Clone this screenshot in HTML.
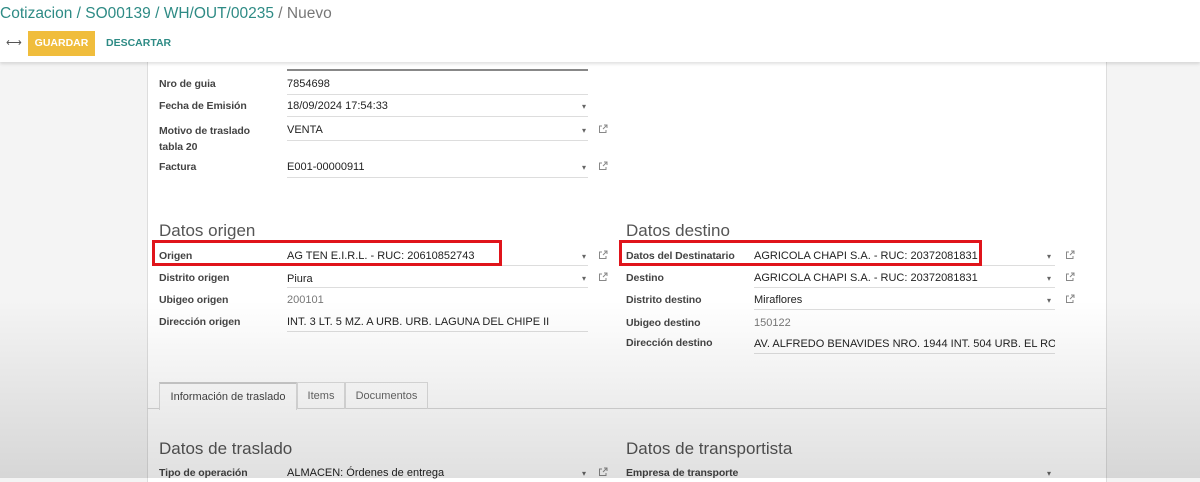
<!DOCTYPE html>
<html><head><meta charset="utf-8"><style>
*{margin:0;padding:0;box-sizing:border-box}
body{width:1200px;height:478px;overflow:hidden;background:#f4f4f4;font-family:"Liberation Sans",Arial,sans-serif;position:relative;color:#333}
.a{position:absolute;white-space:nowrap}
.top{position:absolute;left:0;top:0;width:1200px;height:62px;background:#fff;box-shadow:0 2px 3px rgba(0,0,0,.12);z-index:5}
.bc{left:0;top:5px;font-size:15.5px;color:#2e8b85}
.bc span{color:#777}
.btn{left:28px;top:31px;width:67px;height:25px;background:#f0bd3c;color:#fff;font-size:10.5px;font-weight:bold;text-align:center;line-height:25px}
.sheet{position:absolute;left:147px;top:62px;width:960px;height:420px;background:#fff;border-left:1px solid #ddd;border-right:1px solid #ddd}
.shade{position:absolute;left:0;top:300px;width:1200px;height:178px;background:linear-gradient(rgba(0,0,0,0),rgba(0,0,0,.12));pointer-events:none;z-index:3}
.l{font-size:10.5px;font-weight:bold;color:#444;letter-spacing:-0.1px}
.v{font-size:11px;color:#222}
.u{position:absolute;height:1px;background:#ddd}
.h{font-size:17px;color:#555}
.c{font-size:8px;color:#666}
.ic{position:absolute;width:10px;height:10px}
.red{position:absolute;border:3px solid #e0141b;z-index:4}
.tab{position:absolute;top:382px;height:27px;border:1px solid #ddd;border-bottom:none;font-size:11px;color:#666;line-height:27px;text-align:center}
</style></head><body>
<div class="top">
<div class="a bc">Cotizacion / SO00139 / WH/OUT/00235 <span>/ Nuevo</span></div>
<div class="a" style="left:6px;top:36px;font-size:11px;color:#555">⟷</div>
<div class="a btn">GUARDAR</div>
<div class="a" style="left:106px;top:37px;font-size:10.5px;font-weight:bold;color:#2e8b85">DESCARTAR</div>
</div>
<div class="sheet"></div>
<div class="u" style="left:287px;top:69px;width:301px;height:2px;background:#888;z-index:1"></div>
<svg width="0" height="0" style="position:absolute"><defs><symbol id="ext" viewBox="0 0 10 10"><path d="M4 2H1.5v6.5H8V6" fill="none" stroke="#888" stroke-width="1"/><path d="M5 5L9 1M6 1h3v3" fill="none" stroke="#888" stroke-width="1"/></symbol></defs></svg>

<div class="a l" style="left:159px;top:78px">Nro de guia</div><div class="a v" style="left:287px;top:78px">7854698</div><div class="u" style="left:287px;top:94px;width:301px"></div>
<div class="a l" style="left:159px;top:100px">Fecha de Emisión</div><div class="a v" style="left:287px;top:100px">18/09/2024 17:54:33</div><div class="a c" style="left:582px;top:102px">▾</div><div class="u" style="left:287px;top:116px;width:301px"></div>
<div class="a l" style="left:159px;top:123px;line-height:16px">Motivo de traslado<br>tabla 20</div><div class="a v" style="left:287px;top:124px">VENTA</div><div class="a c" style="left:582px;top:126px">▾</div><svg class="ic" style="left:598px;top:124px"><use href="#ext"/></svg><div class="u" style="left:287px;top:140px;width:301px"></div>
<div class="a l" style="left:159px;top:161px">Factura</div><div class="a v" style="left:287px;top:161px">E001-00000911</div><div class="a c" style="left:582px;top:163px">▾</div><svg class="ic" style="left:598px;top:161px"><use href="#ext"/></svg><div class="u" style="left:287px;top:177px;width:301px"></div>

<div class="a h" style="left:159px;top:221px">Datos origen</div>
<div class="a h" style="left:626px;top:221px">Datos destino</div>

<div class="a l" style="left:159px;top:250px">Origen</div><div class="a v" style="left:287px;top:250px">AG TEN E.I.R.L. - RUC: 20610852743</div><div class="a c" style="left:582px;top:252px">▾</div><svg class="ic" style="left:598px;top:250px"><use href="#ext"/></svg><div class="u" style="left:287px;top:265px;width:301px"></div>
<div class="a l" style="left:159px;top:272px">Distrito origen</div><div class="a v" style="left:287px;top:273px">Piura</div><div class="a c" style="left:582px;top:274px">▾</div><svg class="ic" style="left:598px;top:272px"><use href="#ext"/></svg><div class="u" style="left:287px;top:287px;width:301px"></div>
<div class="a l" style="left:159px;top:294px">Ubigeo origen</div><div class="a v" style="left:287px;top:294px;color:#777">200101</div>
<div class="a l" style="left:159px;top:316px">Dirección origen</div><div class="a v" style="left:287px;top:316px">INT. 3 LT. 5 MZ. A URB. URB. LAGUNA DEL CHIPE II</div><div class="u" style="left:287px;top:331px;width:301px"></div>

<div class="a l" style="left:626px;top:250px">Datos del Destinatario</div><div class="a v" style="left:754px;top:250px">AGRICOLA CHAPI S.A. - RUC: 20372081831</div><div class="a c" style="left:1047px;top:252px">▾</div><svg class="ic" style="left:1065px;top:250px"><use href="#ext"/></svg><div class="u" style="left:754px;top:265px;width:301px"></div>
<div class="a l" style="left:626px;top:272px">Destino</div><div class="a v" style="left:754px;top:272px">AGRICOLA CHAPI S.A. - RUC: 20372081831</div><div class="a c" style="left:1047px;top:274px">▾</div><svg class="ic" style="left:1065px;top:272px"><use href="#ext"/></svg><div class="u" style="left:754px;top:287px;width:301px"></div>
<div class="a l" style="left:626px;top:294px">Distrito destino</div><div class="a v" style="left:754px;top:294px">Miraflores</div><div class="a c" style="left:1047px;top:296px">▾</div><svg class="ic" style="left:1065px;top:294px"><use href="#ext"/></svg><div class="u" style="left:754px;top:309px;width:301px"></div>
<div class="a l" style="left:626px;top:317px">Ubigeo destino</div><div class="a v" style="left:754px;top:317px;color:#777">150122</div>
<div class="a l" style="left:626px;top:337px">Dirección destino</div><div class="a v" style="left:754px;top:338px;width:301px;overflow:hidden">AV. ALFREDO BENAVIDES NRO. 1944 INT. 504 URB. EL ROSEDAL</div><div class="u" style="left:754px;top:353px;width:301px"></div>

<div class="red" style="left:152px;top:240px;width:350px;height:26px"></div>
<div class="red" style="left:619px;top:240px;width:363px;height:26px"></div>

<div class="u" style="left:147px;top:408px;width:960px;background:#d8d8d8"></div>
<div class="tab" style="left:159px;width:138px;background:#fff;color:#444;height:28px;border-top:2px solid #ccc">Información de traslado</div>
<div class="tab" style="left:297px;width:48px">Items</div>
<div class="tab" style="left:345px;width:83px">Documentos</div>

<div class="a h" style="left:159px;top:439px">Datos de traslado</div>
<div class="a h" style="left:626px;top:439px">Datos de transportista</div>
<div class="a l" style="left:159px;top:467px">Tipo de operación</div><div class="a v" style="left:287px;top:467px">ALMACEN: Órdenes de entrega</div><div class="a c" style="left:582px;top:469px">▾</div><svg class="ic" style="left:598px;top:467px"><use href="#ext"/></svg>
<div class="a l" style="left:626px;top:467px">Empresa de transporte</div><div class="a c" style="left:1047px;top:469px">▾</div>
<div class="shade"></div>
</body></html>
